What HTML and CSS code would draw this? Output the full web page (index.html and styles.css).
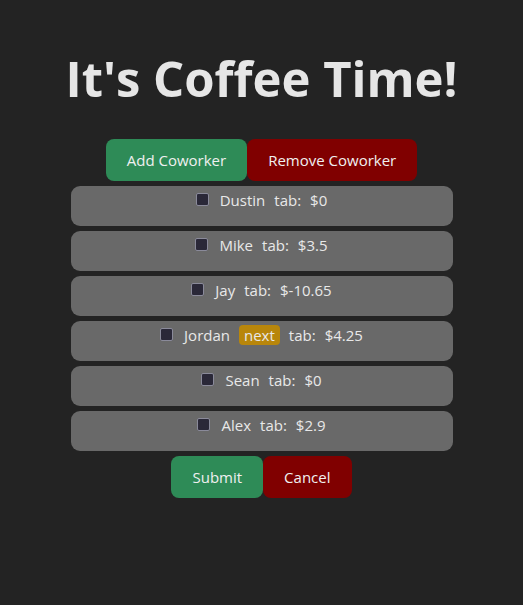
FILE: index.html
```html
<!DOCTYPE html>
<html>
<head>
<meta charset="utf-8">
<link rel="stylesheet" href="styles.css">
</head>
<body>
<div class="app">
  <h1 class="title">It's Coffee Time!</h1>
  <div class="btn-row">
    <button class="btn green">Add Coworker</button>
    <button class="btn red">Remove Coworker</button>
  </div>
  <ul class="list">
    <li class="row"><span class="box"></span><span class="name">Dustin</span><span class="label">tab:</span><span class="amt">$0</span></li>
    <li class="row"><span class="box"></span><span class="name">Mike</span><span class="label">tab:</span><span class="amt">$3.5</span></li>
    <li class="row"><span class="box"></span><span class="name">Jay</span><span class="label">tab:</span><span class="amt">$-10.65</span></li>
    <li class="row"><span class="box"></span><span class="name">Jordan</span><span class="next">next</span><span class="label">tab:</span><span class="amt">$4.25</span></li>
    <li class="row"><span class="box"></span><span class="name">Sean</span><span class="label">tab:</span><span class="amt">$0</span></li>
    <li class="row"><span class="box"></span><span class="name">Alex</span><span class="label">tab:</span><span class="amt">$2.9</span></li>
  </ul>
  <div class="btn-row">
    <button class="btn green">Submit</button>
    <button class="btn red">Cancel</button>
  </div>
</div>
</body>
</html>
```
FILE: styles.css
```css
html, body {
  margin: 0;
  padding: 0;
  background: #232323;
}
body {
  font-family: "Open Sans", "Noto Sans", sans-serif;
  color: #e6e6e6;
}
.app {
  display: flex;
  flex-direction: column;
  align-items: center;
  padding-top: 46px;
}
.title {
  margin: 0 0 29px;
  font-size: 49px;
  font-weight: 700;
  line-height: 64px;
  color: #e6e6e6;
}
.btn-row {
  display: flex;
}
.btn {
  font-family: inherit;
  font-size: 15px;
  color: #f0f0f0;
  border: none;
  border-radius: 8px;
  height: 42px;
  padding: 0 21px;
  cursor: pointer;
}
.green { background: #2e8b57; }
.red { background: #800000; }
.list {
  list-style: none;
  margin: 5px 0 5px;
  padding: 0;
  width: 382px;
  display: flex;
  flex-direction: column;
  gap: 5px;
}
.row {
  background: #696969;
  border-radius: 9px;
  height: 40px;
  box-sizing: border-box;
  padding-top: 3px;
  display: flex;
  justify-content: center;
  align-items: flex-start;
  font-size: 15px;
  line-height: 22px;
  color: #e8e8e8;
}
.box {
  width: 11px;
  height: 11px;
  margin-top: 4px;
  margin-right: 11px;
  background: #2a2838;
  border: 1px solid #8a8a9a;
  border-radius: 2px;
}
.name { margin-right: 9px; }
.label { margin-right: 9px; }
.next {
  background: #b8860b;
  border-radius: 4px;
  padding: 0 5px;
  margin-right: 9px;
  line-height: 20px;
  margin-top: 1px;
}
```
